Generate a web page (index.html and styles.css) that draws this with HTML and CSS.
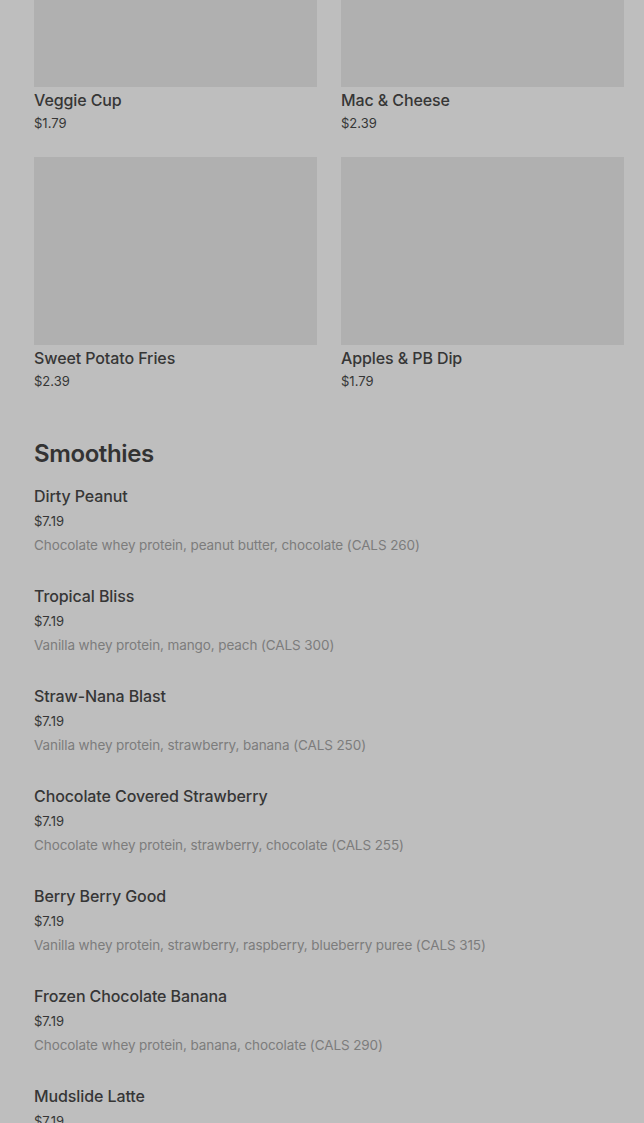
FILE: index.html
```html
<!DOCTYPE html>
<html lang="en">
<head>
<meta charset="utf-8">
<title>Menu</title>
<link rel="stylesheet" href="styles.css">
</head>
<body>
<main class="page">
  <section class="grid">
    <article class="card">
      <div class="thumb"></div>
      <h3 class="card-title">Veggie Cup</h3>
      <p class="price">$1.79</p>
    </article>
    <article class="card">
      <div class="thumb"></div>
      <h3 class="card-title">Mac &amp; Cheese</h3>
      <p class="price">$2.39</p>
    </article>
    <article class="card">
      <div class="thumb"></div>
      <h3 class="card-title">Sweet Potato Fries</h3>
      <p class="price">$2.39</p>
    </article>
    <article class="card">
      <div class="thumb"></div>
      <h3 class="card-title">Apples &amp; PB Dip</h3>
      <p class="price">$1.79</p>
    </article>
  </section>

  <section class="category">
    <h2 class="category-title">Smoothies</h2>
    <ul class="list">
      <li class="item">
        <h3 class="item-name">Dirty Peanut</h3>
        <p class="price">$7.19</p>
        <p class="desc">Chocolate whey protein, peanut butter, chocolate (CALS 260)</p>
      </li>
      <li class="item">
        <h3 class="item-name">Tropical Bliss</h3>
        <p class="price">$7.19</p>
        <p class="desc">Vanilla whey protein, mango, peach (CALS 300)</p>
      </li>
      <li class="item">
        <h3 class="item-name">Straw-Nana Blast</h3>
        <p class="price">$7.19</p>
        <p class="desc">Vanilla whey protein, strawberry, banana (CALS 250)</p>
      </li>
      <li class="item">
        <h3 class="item-name">Chocolate Covered Strawberry</h3>
        <p class="price">$7.19</p>
        <p class="desc">Chocolate whey protein, strawberry, chocolate (CALS 255)</p>
      </li>
      <li class="item">
        <h3 class="item-name">Berry Berry Good</h3>
        <p class="price">$7.19</p>
        <p class="desc">Vanilla whey protein, strawberry, raspberry, blueberry puree (CALS 315)</p>
      </li>
      <li class="item">
        <h3 class="item-name">Frozen Chocolate Banana</h3>
        <p class="price">$7.19</p>
        <p class="desc">Chocolate whey protein, banana, chocolate (CALS 290)</p>
      </li>
      <li class="item">
        <h3 class="item-name">Mudslide Latte</h3>
        <p class="price">$7.19</p>
      </li>
    </ul>
  </section>
</main>
</body>
</html>
```

FILE: styles.css
```css
* { box-sizing: border-box; }

html, body {
  margin: 0;
  padding: 0;
  background: #bebebe;
  overflow: hidden;
}

body {
  font-family: Inter, "Noto Sans", "Liberation Sans", sans-serif;
  color: #333333;
  height: 1123px;
}

.page {
  margin-top: -101px;
  padding: 0 20px 0 34px;
}

.grid {
  display: grid;
  grid-template-columns: 283px 283px;
  column-gap: 24px;
  row-gap: 24px;
}

.card { margin: 0; }

.thumb {
  height: 188px;
  background: #b0b0b0;
}

.card-title {
  margin: 3px 0 0;
  font-size: 16px;
  line-height: 20px;
  font-weight: 500;
  color: #363636;
  letter-spacing: -0.1px;
}

.price {
  margin: 3px 0 0;
  font-size: 13px;
  line-height: 20px;
  font-weight: 400;
  color: #363636;
}

.category {
  margin-top: 47px;
}

.category-title {
  margin: 0;
  font-size: 24px;
  line-height: 32px;
  font-weight: 600;
  color: #333333;
  letter-spacing: -0.4px;
}

.list {
  list-style: none;
  margin: 16px 0 0;
  padding: 0;
  display: flex;
  flex-direction: column;
  gap: 31px;
}

.item-name {
  margin: 0;
  font-size: 16px;
  line-height: 20px;
  font-weight: 500;
  color: #363636;
  letter-spacing: -0.1px;
}

.item .price {
  margin-top: 5px;
}

.desc {
  margin: 4px 0 0;
  font-size: 13.5px;
  line-height: 20px;
  color: #7c7c7c;
  letter-spacing: -0.1px;
}
```
